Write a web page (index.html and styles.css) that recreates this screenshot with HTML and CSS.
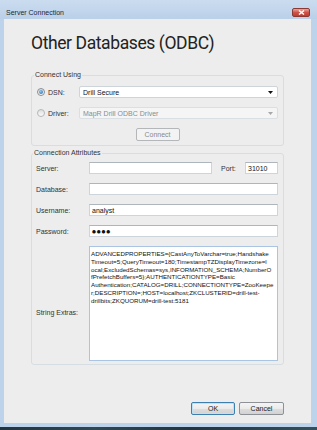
FILE: index.html
```html
<!DOCTYPE html>
<html>
<head>
	<meta charset="utf-8">
	<title>Server Connection</title>
	<link rel="stylesheet" href="styles.css">
</head>
<body>
	<div class="window">
		<div class="titlebar">
			<span class="title">Server Connection</span>
			<span class="close">
				<svg width="7" height="5" viewBox="0 0 7 5"><path d="M1 0.5 L6 4.5 M6 0.5 L1 4.5" stroke="#fff" stroke-width="1.5" fill="none"/></svg>
			</span>
		</div>
		<div class="client">
			<h1 class="heading">Other Databases (ODBC)</h1>

			<fieldset class="group group-using">
				<legend>Connect Using</legend>
				<div class="row">
					<div class="choice"><span class="radio on"></span><span>DSN:</span></div>
					<div class="select">
						<span>Drill Secure</span>
						<svg width="5" height="3" viewBox="0 0 5 3"><path d="M0 0 L5 0 L2.5 3 Z" fill="#111"/></svg>
					</div>
				</div>
				<div class="row">
					<div class="choice"><span class="radio"></span><span>Driver:</span></div>
					<div class="select disabled">
						<span>MapR Drill ODBC Driver</span>
						<svg width="5" height="3" viewBox="0 0 5 3"><path d="M0 0 L5 0 L2.5 3 Z" fill="#a8a8a8"/></svg>
					</div>
				</div>
				<div class="row btnrow">
					<span class="button connect">Connect</span>
				</div>
			</fieldset>

			<fieldset class="group group-attrs">
				<legend>Connection Attributes</legend>
				<div class="row">
					<label>Server:</label>
					<div class="input server"></div>
					<label class="port-label">Port:</label>
					<div class="input port">31010</div>
				</div>
				<div class="row">
					<label>Database:</label>
					<div class="input"></div>
				</div>
				<div class="row">
					<label>Username:</label>
					<div class="input">analyst</div>
				</div>
				<div class="row">
					<label>Password:</label>
					<div class="input dots">&#9679;&#9679;&#9679;&#9679;</div>
				</div>
				<div class="row extras">
					<label>String Extras:</label>
					<div class="textarea">ADVANCEDPROPERTIES={CastAnyToVarchar=true;Handshake
Timeout=5;QueryTimeout=180;TimestampTZDisplayTimezone=l
ocal;ExcludedSchemas=sys,INFORMATION_SCHEMA;NumberO
fPrefetchBuffers=5};AUTHENTICATIONTYPE=Basic
Authentication;CATALOG=DRILL;CONNECTIONTYPE=ZooKeepe
r;DESCRIPTION=;HOST=localhost;ZKCLUSTERID=drill-test-
drillbits;ZKQUORUM=drill-test:5181</div>
				</div>
			</fieldset>

			<div class="actions">
				<span class="button ok">OK</span>
				<span class="button cancel">Cancel</span>
			</div>
		</div>
		<div class="taskbar"></div>
	</div>
</body>
</html>
```

FILE: styles.css
```css
body{
	margin: 0;
	width: 317px;
	height: 430px;
	overflow: hidden;
	font-family: "Liberation Sans", Arial, sans-serif;
	font-size: 7px;
	color: #2b2b2b;
}

.window{
	height: 430px;
	display: flex;
	flex-direction: column;
	background: #bdd3eb;
}

.titlebar{
	height: 19px;
	flex: none;
	box-sizing: border-box;
	padding: 8px 7px 0 6px;
	display: flex;
	align-items: flex-start;
	justify-content: space-between;
	background: linear-gradient(#cbdcef, #bad0e9);
}

.title{
	line-height: 9px;
	color: #1e2833;
}

.close{
	width: 18px;
	height: 9px;
	box-sizing: border-box;
	border: 1px solid #8a3a33;
	border-radius: 2px;
	background: linear-gradient(#e7a79d, #cf5246 50%, #bd3d31);
	display: flex;
	align-items: center;
	justify-content: center;
}

.client{
	flex: 1;
	margin: 0 6px 4px 4px;
	padding: 0 27px 8px;
	background: #ededed;
	display: flex;
	flex-direction: column;
}

.heading{
	margin: 13px 0 17px 0;
	font-family: Roboto, "Liberation Sans", sans-serif;
	font-weight: normal;
	font-size: 17.5px;
	letter-spacing: -0.4px;
	line-height: 22px;
	color: #222;
}

/* group boxes */
.group{
	margin: 0;
	min-width: 0;
	border: 1px solid #d6dde3;
	border-radius: 3px;
	padding: 7px 5px 4px 5px;
}

.group legend{
	font-size: 7px;
	line-height: 8px;
	padding: 0 1px;
	margin-left: -3px;
	color: #333;
}

.group-attrs{
	margin-top: 3px;
	padding: 5px 5px 3px 4px;
}

.row{
	display: flex;
	align-items: center;
	height: 12px;
}

.row + .row{
	margin-top: 9px;
}

.choice{
	width: 42px;
	flex: none;
	display: flex;
	align-items: center;
	color: #333;
}

.radio{
	width: 8px;
	height: 8px;
	box-sizing: border-box;
	margin-right: 3px;
	border: 1px solid #b4b7ba;
	border-radius: 50%;
	background: linear-gradient(#dedede, #fbfbfb);
	display: flex;
	align-items: center;
	justify-content: center;
}

.radio.on{
	border-color: #8a8d91;
}

.radio.on::after{
	content: "";
	width: 4px;
	height: 4px;
	border-radius: 50%;
	background: radial-gradient(circle at 40% 35%, #8fcaf3, #1d5fa6);
}

.select{
	flex: 1;
	height: 12px;
	box-sizing: border-box;
	padding: 0 4px 0 3px;
	border: 1px solid #cdd4da;
	border-radius: 2px;
	background: #fff;
	display: flex;
	align-items: center;
	justify-content: space-between;
	color: #111;
}

.select.disabled{
	background: #f5f5f5;
	border-color: #dadfe3;
	color: #8c8c8c;
}

.btnrow{
	justify-content: center;
	height: 13px;
}

.button{
	height: 13px;
	box-sizing: border-box;
	border: 1px solid #8e9195;
	border-radius: 2px;
	background: linear-gradient(#f4f4f4, #ebebeb 50%, #dedede 51%, #d2d2d2);
	display: flex;
	align-items: center;
	justify-content: center;
	color: #222;
}

.connect{
	width: 44px;
	border-color: #b4b7ba;
	background: #f3f3f3;
	color: #8a8a8a;
}

.group label{
	width: 53px;
	flex: none;
	color: #333;
}

.group .port-label{
	width: 24px;
	margin-left: 9px;
}

.input{
	flex: 1;
	height: 12px;
	box-sizing: border-box;
	padding-left: 2px;
	border: 1px solid #cdd4db;
	border-top-color: #aeb5bd;
	background: #fff;
	display: flex;
	align-items: center;
	color: #111;
}

.server{
	flex: none;
	width: 123px;
}

.port{
	flex: none;
	width: 33px;
}

.dots{
	font-family: "DejaVu Sans", sans-serif;
	font-size: 4.5px;
	letter-spacing: 0.8px;
}

.row.extras{
	height: 115px;
	align-items: flex-start;
}

.extras label{
	margin-top: 63px;
}

.textarea{
	flex: 1;
	height: 115px;
	box-sizing: border-box;
	padding: 3px 1px;
	border: 1px solid #aac5e4;
	background: #fff;
	font-size: 6.2px;
	line-height: 7.8px;
	white-space: pre;
	overflow: hidden;
	color: #111;
}

.actions{
	margin-top: auto;
	display: flex;
	justify-content: flex-end;
	gap: 4px;
}

.ok{
	width: 44px;
	border-color: #3c7fb1;
	box-shadow: inset 0 0 0 1px #bfe0f5;
}

.cancel{
	width: 45px;
}

.taskbar{
	height: 3px;
	flex: none;
	background: linear-gradient(90deg, #22343f, #2f4856 30%, #22343f 60%, #34505e);
}
```
